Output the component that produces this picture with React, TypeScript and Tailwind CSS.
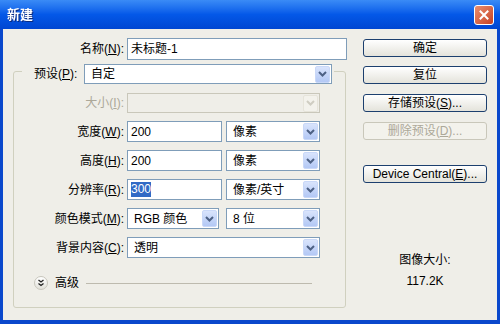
import React from 'react';

const FONT = "font-['Liberation_Sans','Noto_Sans_CJK_SC',sans-serif]";

const Arrow = ({ disabled }: { disabled?: boolean }) => (
  <div
    className={`w-[15px] h-[17px] flex items-center justify-center rounded-[2px] border ${
      disabled ? 'bg-[#F3F2EC] border-[#E6E4DA]' : 'bg-gradient-to-b from-[#D9E4FC] to-[#B3C8F5] border-[#C9D8F8]'
    }`}
  >
    <svg width="9" height="6" viewBox="0 0 9 6">
      <path d="M1 1 L4.5 4.5 L8 1" stroke={disabled ? '#CFCDC2' : '#4D6185'} strokeWidth="2" fill="none" />
    </svg>
  </div>
);

const Select = ({ value, w, disabled, h = 'h-[21px]' }: { value?: string; w: string; disabled?: boolean; h?: string }) => (
  <div
    className={`${w} ${h} border flex items-center pl-[6px] pr-[1px] ${
      disabled ? 'border-[#C9C7BA] bg-[#EFEEE8]' : 'border-[#7F9DB9] bg-white'
    }`}
  >
    <span className="flex-1 text-[12px] text-black whitespace-nowrap">{value}</span>
    <Arrow disabled={disabled} />
  </div>
);

const Input = ({ children, w }: { children: React.ReactNode; w: string }) => (
  <div className={`${w} h-[21px] border border-[#7F9DB9] bg-white flex items-center pl-[3px] text-[12px] text-black`}>
    {children}
  </div>
);

const Label = ({ text, k, disabled }: { text: string; k: string; disabled?: boolean }) => (
  <div className={`w-[110px] text-right text-[12px] whitespace-nowrap ${disabled ? 'text-[#ACA899]' : 'text-black'}`}>
    {text}(<u>{k}</u>):
  </div>
);

const Button = ({ children, disabled, mt }: { children: React.ReactNode; disabled?: boolean; mt: string }) => (
  <div
    className={`${mt} h-[18px] rounded-[3px] border flex items-center justify-center text-[12px] whitespace-nowrap ${
      disabled
        ? 'border-[#C9C7BA] bg-[#F3F2EC] text-[#ACA899]'
        : 'border-[#1C3F6E] bg-gradient-to-b from-white to-[#E4E3DB] text-black'
    }`}
  >
    {children}
  </div>
);

export default function App() {
  return (
    <div className={`w-[500px] h-[324px] flex flex-col bg-[#0A48CC] ${FONT}`}>
      {/* title bar */}
      <div className="h-[29px] flex items-center justify-between pl-[7px] pr-[6px] bg-gradient-to-b from-[#3A8BF6] via-[#0458E8] to-[#0046D2]">
        <span className="text-white font-bold text-[13px] drop-shadow-[1px_1px_0_#0A2A80]">新建</span>
        <div className="w-[20px] h-[20px] rounded-[3px] border border-white bg-gradient-to-br from-[#E98E6E] to-[#C63F22] flex items-center justify-center">
          <svg width="10" height="10" viewBox="0 0 10 10">
            <path d="M1.5 1.5 L8.5 8.5 M8.5 1.5 L1.5 8.5" stroke="white" strokeWidth="2" strokeLinecap="square" />
          </svg>
        </div>
      </div>

      {/* body */}
      <div className="flex-1 mx-[3px] mb-[4px] bg-[#EFEEE8] flex items-start pl-[10px]">
        {/* left column */}
        <div className="w-[334px] mt-[9px] flex flex-col">
          <div className="h-[22px] flex items-center">
            <div className="w-[111px] text-right text-[12px] text-black">
              名称(<u>N</u>):
            </div>
            <div className="ml-[3px] flex-1 h-[22px] border border-[#7F9DB9] bg-white flex items-center pl-[3px] text-[12px] text-black">
              未标题-1
            </div>
          </div>

          {/* group box */}
          <div className="mt-[11px] w-[333px] h-[237px] border border-[#D0D0BF] rounded-[3px] flex flex-col">
            <div className="-mt-[8px] ml-[8px] pl-[12px] pr-[2px] w-fit h-[20px] flex items-center bg-[#EFEEE8]">
              <div className="w-[50px] text-[12px] text-black whitespace-nowrap">
                预设(<u>P</u>):
              </div>
              <Select value="自定" w="w-[248px]" h="h-[20px]" />
            </div>

            <div className="mt-[9px] h-[20px] flex items-center">
              <Label text="大小" k="I" disabled />
              <div className="ml-[3px]">
                <Select w="w-[193px]" h="h-[20px]" disabled />
              </div>
            </div>

            <div className="mt-[8px] h-[21px] flex items-center">
              <Label text="宽度" k="W" />
              <div className="ml-[3px]">
                <Input w="w-[95px]">200</Input>
              </div>
              <div className="ml-[4px]">
                <Select value="像素" w="w-[94px]" />
              </div>
            </div>

            <div className="mt-[8px] h-[21px] flex items-center">
              <Label text="高度" k="H" />
              <div className="ml-[3px]">
                <Input w="w-[95px]">200</Input>
              </div>
              <div className="ml-[4px]">
                <Select value="像素" w="w-[94px]" />
              </div>
            </div>

            <div className="mt-[8px] h-[21px] flex items-center">
              <Label text="分辨率" k="R" />
              <div className="ml-[3px]">
                <Input w="w-[95px]">
                  <span className="bg-[#316AC5] text-white leading-[15px]">300</span>
                </Input>
              </div>
              <div className="ml-[4px]">
                <Select value="像素/英寸" w="w-[94px]" />
              </div>
            </div>

            <div className="mt-[8px] h-[21px] flex items-center">
              <Label text="颜色模式" k="M" />
              <div className="ml-[3px]">
                <Select value="RGB 颜色" w="w-[92px]" />
              </div>
              <div className="ml-[7px]">
                <Select value="8 位" w="w-[94px]" />
              </div>
            </div>

            <div className="mt-[8px] h-[21px] flex items-center">
              <Label text="背景内容" k="C" />
              <div className="ml-[3px]">
                <Select value="透明" w="w-[193px]" />
              </div>
            </div>

            <div className="mt-[18px] h-[14px] flex items-center">
              <div className="ml-[20px] w-[14px] h-[14px] rounded-full border border-[#C8C6BC] bg-gradient-to-b from-white to-[#E2E1DA] flex items-center justify-center">
                <svg width="8" height="8" viewBox="0 0 8 8">
                  <path d="M1.5 1 L4 3 L6.5 1 M1.5 4.5 L4 6.5 L6.5 4.5" stroke="#222" strokeWidth="1.3" fill="none" />
                </svg>
              </div>
              <span className="ml-[7px] text-[12px] text-black">高级</span>
              <div className="ml-[7px] mr-[33px] flex-1 h-px bg-[#BDBAAE]" />
            </div>
          </div>
        </div>

        {/* right column */}
        <div className="ml-[16px] mt-[10px] w-[124px] flex flex-col">
          <Button mt="mt-0">确定</Button>
          <Button mt="mt-[9px]">复位</Button>
          <Button mt="mt-[10px]">
            存储预设(<u>S</u>)...
          </Button>
          <Button mt="mt-[10px]" disabled>
            删除预设(<u>D</u>)...
          </Button>
          <Button mt="mt-[25px]">
            Device Central(<u>E</u>)...
          </Button>
          <div className="mt-[68px] text-center text-[12px] text-black">图像大小:</div>
          <div className="mt-[3px] text-center text-[12px] text-black">117.2K</div>
        </div>
      </div>
    </div>
  );
}
